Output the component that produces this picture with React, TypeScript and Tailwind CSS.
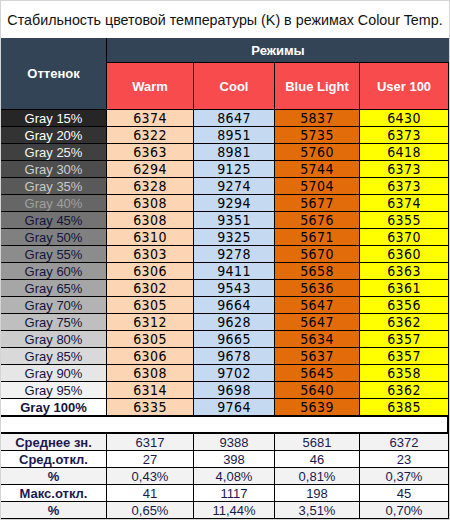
const modes = [
  { name: 'Warm', w: 'w-[87px]', bg: 'bg-[#fcd5b4]' },
  { name: 'Cool', w: 'w-[81px]', bg: 'bg-[#c5d9f1]' },
  { name: 'Blue Light', w: 'w-[85px]', bg: 'bg-[#e26b0a]' },
  { name: 'User 100', w: 'w-[89px]', bg: 'bg-[#ffff00]' },
];

const rows = [
  { label: 'Gray 15%', bg: 'bg-[#262626]', fg: 'text-white', v: [6374, 8647, 5837, 6430] },
  { label: 'Gray 20%', bg: 'bg-[#333333]', fg: 'text-white', v: [6322, 8951, 5735, 6373] },
  { label: 'Gray 25%', bg: 'bg-[#404040]', fg: 'text-[#f2f2f2]', v: [6363, 8981, 5760, 6418] },
  { label: 'Gray 30%', bg: 'bg-[#4d4d4d]', fg: 'text-[#d0d0d0]', v: [6294, 9125, 5744, 6373] },
  { label: 'Gray 35%', bg: 'bg-[#595959]', fg: 'text-[#c8c8c8]', v: [6328, 9274, 5704, 6373] },
  { label: 'Gray 40%', bg: 'bg-[#666666]', fg: 'text-[#a0a0a0]', v: [6308, 9294, 5677, 6374] },
  { label: 'Gray 45%', bg: 'bg-[#737373]', fg: 'text-[#14143c]', v: [6308, 9351, 5676, 6355] },
  { label: 'Gray 50%', bg: 'bg-[#808080]', fg: 'text-[#14143c]', v: [6310, 9325, 5671, 6370] },
  { label: 'Gray 55%', bg: 'bg-[#8c8c8c]', fg: 'text-[#14143c]', v: [6303, 9278, 5670, 6360] },
  { label: 'Gray 60%', bg: 'bg-[#999999]', fg: 'text-[#14143c]', v: [6306, 9411, 5658, 6363] },
  { label: 'Gray 65%', bg: 'bg-[#a6a6a6]', fg: 'text-[#14143c]', v: [6302, 9543, 5636, 6361] },
  { label: 'Gray 70%', bg: 'bg-[#b3b3b3]', fg: 'text-[#14143c]', v: [6305, 9664, 5647, 6356] },
  { label: 'Gray 75%', bg: 'bg-[#bfbfbf]', fg: 'text-[#14143c]', v: [6312, 9628, 5647, 6362] },
  { label: 'Gray 80%', bg: 'bg-[#cccccc]', fg: 'text-[#14143c]', v: [6305, 9665, 5634, 6357] },
  { label: 'Gray 85%', bg: 'bg-[#d9d9d9]', fg: 'text-[#14143c]', v: [6306, 9678, 5637, 6357] },
  { label: 'Gray 90%', bg: 'bg-[#e6e6e6]', fg: 'text-[#14143c]', v: [6308, 9702, 5645, 6358] },
  { label: 'Gray 95%', bg: 'bg-[#f2f2f2]', fg: 'text-[#14143c]', v: [6314, 9698, 5640, 6362] },
  { label: 'Gray 100%', bg: 'bg-white', fg: 'text-[#14143c] font-bold', v: [6335, 9764, 5639, 6385] },
];

const stats = [
  { label: 'Среднее зн.', bg: 'bg-[#f2f2f2]', v: ['6317', '9388', '5681', '6372'] },
  { label: 'Сред.откл.', bg: 'bg-white', v: ['27', '398', '46', '23'] },
  { label: '%', bg: 'bg-[#f2f2f2]', v: ['0,43%', '4,08%', '0,81%', '0,37%'] },
  { label: 'Макс.откл.', bg: 'bg-white', v: ['41', '1117', '198', '45'] },
  { label: '%', bg: 'bg-[#f2f2f2]', v: ['0,65%', '11,44%', '3,51%', '0,70%'] },
];

export default function App() {
  return (
    <div className="w-[450px] h-[520px] border border-[#d4d4d4] bg-white font-['Liberation_Sans',Arial,sans-serif] text-[13px] leading-none">
      <div className="h-[37px] flex items-center justify-center pt-[2px] text-[#111] text-[14.3px]">
        Стабильность цветовой температуры (K) в режимах Colour Temp.
      </div>

      {/* header */}
      <div className="flex h-[72px] bg-[#334457] text-white font-bold border-b border-black">
        <div className="w-[106px] flex items-center justify-center border-r border-black">Оттенок</div>
        <div className="flex-1 flex flex-col">
          <div className="h-[25px] flex items-center justify-center border-b border-black">Режимы</div>
          <div className="flex-1 flex bg-[#f74b4d]">
            {modes.map((m, i) => (
              <div key={i} className={`${m.w} flex items-center justify-center border-r border-black`}>
                {m.name}
              </div>
            ))}
          </div>
        </div>
      </div>

      {/* data */}
      {rows.map((r, i) => (
        <div
          key={i}
          className={`flex ${i === rows.length - 1 ? 'h-[18px] border-b-2' : 'h-[17px] border-b'} border-black`}
        >
          <div className={`w-[106px] flex items-center justify-center border-r border-black ${r.bg} ${r.fg}`}>
            {r.label}
          </div>
          {r.v.map((n, j) => (
            <div
              key={j}
              className={`${modes[j].w} ${modes[j].bg} flex items-center justify-center border-r border-black text-black text-[14px] tracking-[0.4px] font-['Liberation_Sans_Narrow','DejaVu_Sans_Condensed',sans-serif]`}
            >
              {n}
            </div>
          ))}
        </div>
      ))}

      <div className="h-[17px] border-b-2 border-r-2 border-black bg-white" />

      {/* stats */}
      {stats.map((s, i) => (
        <div key={i} className={`flex h-[17px] border-b border-black ${s.bg} text-[#1a1a50]`}>
          <div className="w-[106px] flex items-center justify-center border-r border-black font-bold">{s.label}</div>
          {s.v.map((v, j) => (
            <div key={j} className={`${modes[j].w} flex items-center justify-center border-r border-black`}>
              {v}
            </div>
          ))}
        </div>
      ))}
    </div>
  );
}
